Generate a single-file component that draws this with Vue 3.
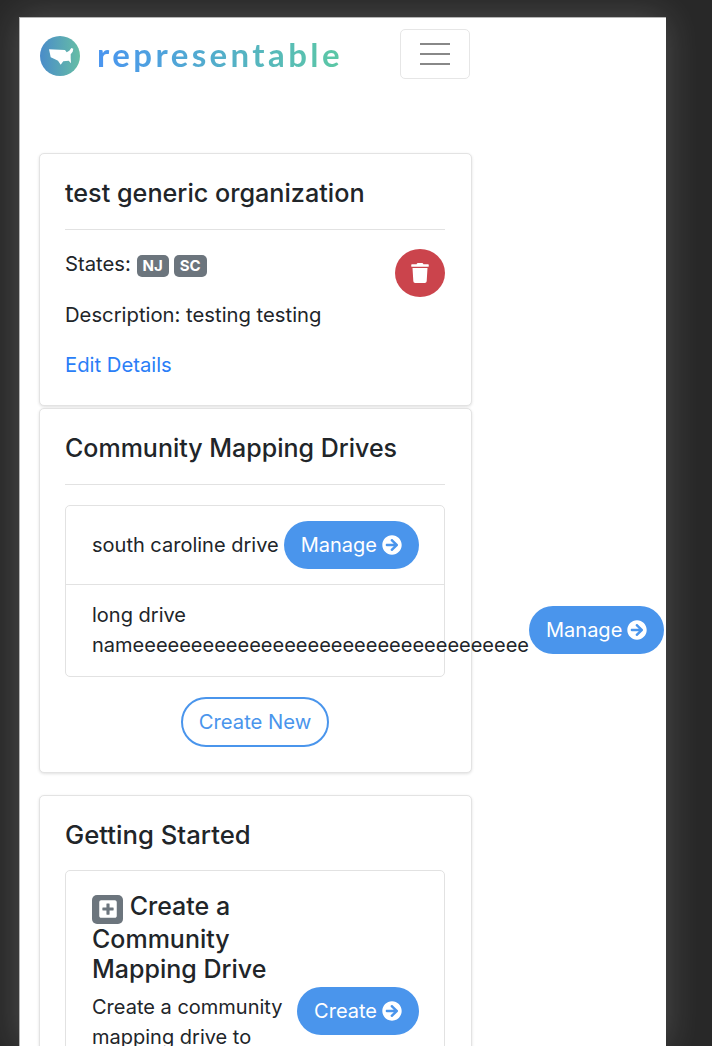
<script setup>
const arrow = "M256 8c137 0 248 111 248 248S393 504 256 504 8 393 8 256 119 8 256 8zm-28.9 143.6l75.5 72.4H120c-13.3 0-24 10.7-24 24v16c0 13.3 10.7 24 24 24h182.6l-75.5 72.4c-9.7 9.3-9.9 24.8-.4 34.3l11 10.9c9.4 9.4 24.6 9.4 33.9 0L404.3 273c9.4-9.4 9.4-24.6 0-33.9L271.6 106.3c-9.4-9.4-24.6-9.4-33.9 0l-11 10.9c-9.3 9.6-9.1 25.1.4 34.4z"
const states = ['NJ', 'SC']
</script>

<template>
  <div class="frame">
    <div class="window">
      <nav class="nav">
        <a class="brand">
          <svg class="logo" viewBox="0 0 40 40" width="40" height="40">
            <defs>
              <linearGradient id="lg" x1="0" y1="0" x2="1" y2="0">
                <stop offset="0" stop-color="#4a8cc9" />
                <stop offset="1" stop-color="#66bea5" />
              </linearGradient>
            </defs>
            <circle cx="20" cy="20" r="20" fill="url(#lg)" />
            <path fill="#fff" d="M9 13.300 L25 14 L26.700 16.300 L29.300 14.700 L31.300 12 L33.300 12.700 L32.700 15.700 L30.700 18.300 L30.700 22.300 L31 27.300 L28.700 24.700 L23.300 25.300 L20.700 28.700 L18 24.700 L14 22.700 L10.700 21.300 Z" />
          </svg>
          <span class="word">representable</span>
        </a>
        <button class="toggler"><span></span><span></span><span></span></button>
      </nav>

      <main class="content">
        <section class="card">
          <h4>test generic organization</h4>
          <hr class="tight" />
          <div class="org">
            <div>
              <p class="states">States: <span v-for="s in states" :key="s" class="badge">{{ s }}</span></p>
              <p>Description: testing testing</p>
              <p class="last"><a class="link">Edit Details</a></p>
            </div>
            <button class="trash" aria-label="Delete">
              <svg viewBox="0 0 448 512" width="18" height="20"><path fill="#fff" d="M432 32H312l-9.400-18.700A24 24 0 0 0 281.100 0H166.800a23.720 23.720 0 0 0-21.400 13.300L136 32H16A16 16 0 0 0 0 48v32a16 16 0 0 0 16 16h416a16 16 0 0 0 16-16V48a16 16 0 0 0-16-16zM53.200 467a48 48 0 0 0 47.900 45h245.800a48 48 0 0 0 47.900-45L416 128H32z" /></svg>
            </button>
          </div>
        </section>

        <section class="card touching">
          <h4>Community Mapping Drives</h4>
          <hr />
          <ul class="list">
            <li class="row">
              <span>south caroline drive</span>
              <button class="btn">Manage <svg viewBox="0 0 512 512" width="20" height="20"><path fill="#fff" :d="arrow" /></svg></button>
            </li>
            <li class="row tall">
              <span>long drive nameeeeeeeeeeeeeeeeeeeeeeeeeeeeeeeeee</span>
              <button class="btn">Manage <svg viewBox="0 0 512 512" width="20" height="20"><path fill="#fff" :d="arrow" /></svg></button>
            </li>
          </ul>
          <div class="center"><button class="outline">Create New</button></div>
        </section>

        <section class="card spaced">
          <h4 class="started">Getting Started</h4>
          <div class="inner">
            <div class="inner-text">
              <h5>
                <span class="icon-badge"><svg viewBox="0 0 448 512" width="18" height="20"><path fill="#fff" d="M400 32H48C21.500 32 0 53.500 0 80v352c0 26.500 21.500 48 48 48h352c26.500 0 48-21.500 48-48V80c0-26.500-21.500-48-48-48zm-32 252c0 6.600-5.400 12-12 12h-92v92c0 6.600-5.400 12-12 12h-56c-6.600 0-12-5.400-12-12v-92H92c-6.600 0-12-5.400-12-12v-56c0-6.600 5.400-12 12-12h92v-92c0-6.600 5.400-12 12-12h56c6.600 0 12 5.400 12 12v92h92c6.600 0 12 5.400 12 12v56z" /></svg></span>
                Create a Community Mapping Drive
              </h5>
              <p>Create a community mapping drive to collect maps from your community.</p>
            </div>
            <button class="btn">Create <svg viewBox="0 0 512 512" width="20" height="20"><path fill="#fff" :d="arrow" /></svg></button>
          </div>
        </section>
      </main>
    </div>
  </div>
</template>

<style scoped>
.frame {
  height: 1046px;
  box-sizing: border-box;
  padding: 17px 46px 0 19px;
  background: #282828;
  overflow: hidden;
  font-family: Inter, "Liberation Sans", sans-serif;
  font-size: 20.25px;
  line-height: 30px;
  color: #212529;
}
.window {
  height: 100%;
  box-sizing: border-box;
  background: #fff;
  border-top: 1px solid #b5b5b5;
  border-left: 1px solid #b5b5b5;
  box-shadow: 0 0 34px rgba(255, 255, 255, 0.18);
  padding-left: 19px;
}
.nav {
  width: 431px;
  display: flex;
  align-items: center;
  justify-content: space-between;
  padding-top: 11px;
}
.brand { display: flex; align-items: center; gap: 17px; margin-top: 3px; }
.logo { margin-left: 1px; display: block; }
.word {
  font-family: Lato, sans-serif;
  font-size: 33px;
  letter-spacing: 3.4px;
  line-height: 40px;
  font-weight: 700;
  margin-top: -4px;
  background: linear-gradient(90deg, #4a95f0, #5cc8a4);
  -webkit-background-clip: text;
  background-clip: text;
  color: transparent;
}
.toggler {
  width: 70px;
  height: 50px;
  box-sizing: border-box;
  background: #fff;
  border: 1px solid #e6e6e6;
  border-radius: 5px;
  display: flex;
  flex-direction: column;
  align-items: center;
  justify-content: center;
  gap: 8px;
  padding: 0;
}
.toggler span { display: block; width: 30px; height: 2px; background: #888; }
.content { width: 433px; margin-top: 74px; }
.card {
  box-sizing: border-box;
  background: #fff;
  border: 1px solid #e3e3e3;
  border-radius: 5px;
  box-shadow: 0 1px 3px rgba(0, 0, 0, 0.12);
  padding: 25px 26px 25px 25px;
}
.touching { margin-top: 2px; }
.touching h4 { font-size: 25px; }
.spaced { margin-top: 22px; }
h4 { margin: 0; padding-bottom: 2px; font-size: 25.2px; line-height: 28px; font-weight: 500; }
.started { margin-bottom: 20px; padding-bottom: 1px; font-size: 25.700px; }
hr { margin: 20px 0; border: 0; border-top: 1px solid #e2e2e2; }
hr.tight { margin-bottom: 19px; }
p { margin: 0 0 20px; }
.states { margin-bottom: 21px; }
.last { margin-bottom: 0; }
.org { display: flex; justify-content: space-between; align-items: flex-start; }
.badge {
  display: inline-block;
  background: #6c757d;
  color: #fff;
  font-size: 15px;
  font-weight: 700;
  line-height: 15px;
  padding: 3px 6px 4px;
  border-radius: 5px;
  margin-right: 5px;
}
.link { color: #2a7ef7; }
.trash {
  width: 50px;
  height: 48px;
  border: 0;
  padding: 0;
  border-radius: 50%;
  background: #cb444c;
  display: flex;
  align-items: center;
  justify-content: center;
}
.list { list-style: none; margin: 0; padding: 0; border: 1px solid #e2e2e2; border-radius: 5px; }
.row {
  display: flex;
  align-items: center;
  justify-content: space-between;
  padding: 15px 25px 15px 26px;
  font-size: 20px;
}
.row + .row { border-top: 1px solid #e2e2e2; }
.row.tall { padding-bottom: 16px; }
.btn {
  flex-shrink: 0;
  height: 48px;
  border: 0;
  border-radius: 24px;
  background: #4a95ec;
  color: #fff;
  font-family: inherit;
  font-size: 20px;
  line-height: 30px;
  padding: 0 17px;
  display: inline-flex;
  align-items: center;
  gap: 5px;
}
.center { display: flex; justify-content: center; margin-top: 20px; }
.outline {
  height: 50px;
  border: 2px solid #4a95ec;
  border-radius: 25px;
  background: #fff;
  color: #4a95ec;
  font: inherit;
  padding: 0 15.25px;
}
.inner {
  border: 1px solid #e2e2e2;
  border-radius: 5px;
  padding: 20px 25px 20px 26px;
  display: flex;
  align-items: center;
  justify-content: space-between;
  gap: 10px;
  font-size: 20px;
}
.inner-text { width: 195px; flex-shrink: 0; }
h5 { margin: 0 0 7px; font-size: 25px; line-height: 30.5px; font-weight: 500; }
.icon-badge {
  display: inline-flex;
  align-items: center;
  justify-content: center;
  width: 31px;
  height: 29px;
  background: #6c757d;
  border-radius: 5px;
  vertical-align: -4px;
}
</style>

<style>
html, body { margin: 0; background: #282828; overflow: hidden; }
</style>
